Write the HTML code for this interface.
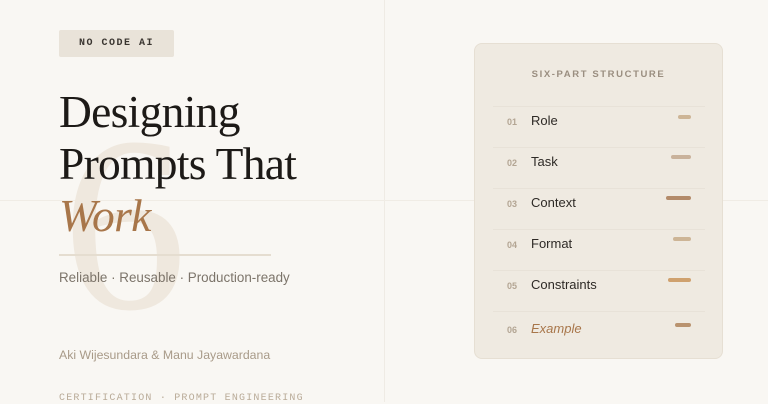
<!DOCTYPE html>
<html><head><style>
*{margin:0;padding:0;box-sizing:border-box}
body{width:768px;height:402px;background:#f9f7f3;position:relative;overflow:hidden;font-family:"Liberation Sans",sans-serif}
.vl{position:absolute;left:384px;top:0;width:1px;height:402px;background:#efebe4}
.hl{position:absolute;left:0;top:200px;width:768px;height:1px;background:#f0ece5}
.six{position:absolute;left:62px;top:100px;font-family:"Liberation Serif",serif;font-size:250px;line-height:1;color:#efe8de}
.tag{position:absolute;left:59px;top:30px;width:115px;height:27px;background:#e9e3d9;border-radius:2px;font-family:"Liberation Mono",monospace;font-weight:bold;font-size:10px;letter-spacing:1.5px;color:#3a3530;text-align:center;line-height:28px}
h1{position:absolute;left:59px;top:86px;font-family:"Liberation Serif",serif;font-weight:normal;font-size:45.5px;line-height:52px;color:#1d1a17;letter-spacing:-0.7px}
h1 i{color:#a8764a}
.rule{position:absolute;left:59px;top:254px;width:212px;height:2px;background:#e5ddd0}
.sub{position:absolute;left:59px;top:270px;font-size:13.4px;color:#7c746a}
.auth{position:absolute;left:59px;top:348px;font-size:12.3px;color:#a89a88}
.cert{position:absolute;left:59px;top:393px;font-family:"Liberation Mono",monospace;font-size:10px;letter-spacing:1.2px;color:#b9ab98}
.card{position:absolute;left:474px;top:43px;width:249px;height:316px;background:#efeae1;border:1px solid #e6dfd3;border-radius:8px}
.ct{position:absolute;left:0;width:100%;top:25px;text-align:center;font-size:9.5px;font-weight:bold;letter-spacing:1.6px;color:#9a8e80}
.row{position:absolute;left:18px;width:212px;border-top:1px solid #e8e2d8;height:41px}
.n{position:absolute;left:14px;font-size:9px;font-weight:bold;color:#b3a593}
.t{position:absolute;left:38px;font-size:13px;color:#2e2a26}
.b{position:absolute;right:14px;height:4px;border-radius:2px}
</style></head><body>
<div class="vl"></div><div class="hl"></div>
<div class="six">6</div>
<div class="tag">NO CODE AI</div>
<h1>Designing<br>Prompts That<br><i>Work</i></h1>
<div class="rule"></div>
<div class="sub">Reliable · Reusable · Production-ready</div>
<div class="auth">Aki Wijesundara &amp; Manu Jayawardana</div>
<div class="cert">CERTIFICATION · PROMPT ENGINEERING</div>
<div class="card">
<div class="ct">SIX-PART STRUCTURE</div>
<div class="row" style="top:62px"><span class="n" style="top:10px">01</span><span class="t" style="top:6px">Role</span><span class="b" style="top:8px;width:13px;background:#cdb596"></span></div>
<div class="row" style="top:103px"><span class="n" style="top:10px">02</span><span class="t" style="top:6px">Task</span><span class="b" style="top:7px;width:20px;background:#c9b29b"></span></div>
<div class="row" style="top:144px"><span class="n" style="top:10px">03</span><span class="t" style="top:6px">Context</span><span class="b" style="top:7px;width:25px;background:#b38b6a"></span></div>
<div class="row" style="top:185px"><span class="n" style="top:10px">04</span><span class="t" style="top:6px">Format</span><span class="b" style="top:7px;width:18px;background:#cdb596"></span></div>
<div class="row" style="top:226px"><span class="n" style="top:10px">05</span><span class="t" style="top:6px">Constraints</span><span class="b" style="top:7px;width:23px;background:#cfa16e"></span></div>
<div class="row" style="top:267px;height:48px"><span class="n" style="top:13px">06</span><span class="t" style="top:9px;font-style:italic;color:#a8764a">Example</span><span class="b" style="top:11px;width:16px;background:#b9936f"></span></div>
</div>
</body></html>
